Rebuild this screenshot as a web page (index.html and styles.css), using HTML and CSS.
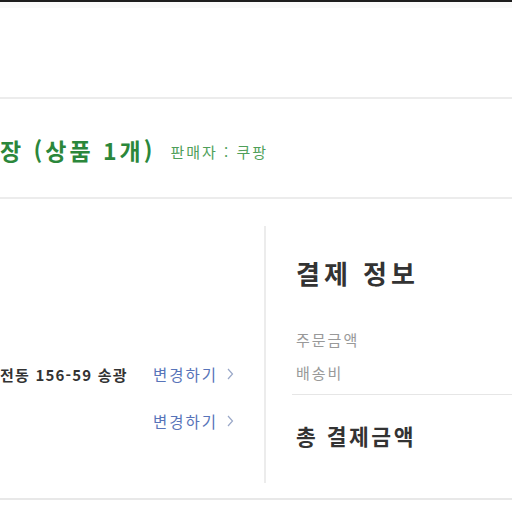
FILE: index.html
```html
<!DOCTYPE html>
<html lang="ko">
<head>
<meta charset="utf-8">
<link rel="stylesheet" href="styles.css">
</head>
<body>
<div class="topbar"></div>
<div class="topshade"></div>
<div class="gap"></div>
<section class="seller-head">
  <h2 class="bundle-title">장 (상품 1개)</h2>
  <span class="seller">판매자 : 쿠팡</span>
</section>
<section class="content">
  <div class="ship-col">
    <div class="ship-row">
      <span class="address">전동 156-59 송광</span>
      <a class="change-link">변경하기<svg class="chev" width="7" height="12" viewBox="0 0 7 12"><path d="M1 1 L5.5 6 L1 11" fill="none" stroke="#9aa8c8" stroke-width="1.2"/></svg></a>
    </div>
    <div class="ship-row">
      <span class="address"></span>
      <a class="change-link">변경하기<svg class="chev" width="7" height="12" viewBox="0 0 7 12"><path d="M1 1 L5.5 6 L1 11" fill="none" stroke="#9aa8c8" stroke-width="1.2"/></svg></a>
    </div>
  </div>
  <div class="pay-col">
    <h3 class="pay-title">결제 정보</h3>
    <div class="pay-rows">
      <div class="pay-row">주문금액</div>
      <div class="pay-row">배송비</div>
    </div>
    <div class="pay-divider"></div>
    <div class="pay-total">총 결제금액</div>
  </div>
</section>
</body>
</html>
```
FILE: styles.css
```css
* { box-sizing: border-box; }
html, body { margin: 0; padding: 0; background: #fff; }
body {
  width: 512px;
  height: 512px;
  overflow: hidden;
  font-family: "Noto Sans CJK KR", "Noto Sans", "Liberation Sans", sans-serif;
  color: #333;
}
.topbar { height: 2px; background: #1e1e1e; }
.topshade { height: 6px; background: #fafafa; }
.gap { height: 89px; }
.seller-head {
  height: 102px;
  border-top: 2px solid #ececec;
  border-bottom: 2px solid #ececec;
  display: flex;
  align-items: center;
  gap: 15px;
  padding-top: 4px;
}
.bundle-title {
  margin: 0;
  font-size: 23px;
  font-weight: 700;
  color: #2b873b;
  line-height: 30px;
  letter-spacing: 3px;
}
.seller {
  font-size: 15px;
  color: #4f9f5a;
  line-height: 20px;
  padding-top: 3px;
  letter-spacing: 2px;
}
.content {
  display: flex;
  height: 301px;
  padding: 27px 0 15px;
  border-bottom: 2px solid #e8e8e8;
}
.ship-col {
  width: 266px;
  border-right: 2px solid #ececec;
  padding-top: 136px;
  display: flex;
  flex-direction: column;
  gap: 23px;
}
.ship-row {
  display: grid;
  grid-template-columns: 153px auto;
  height: 24px;
  align-items: center;
}
.address {
  font-size: 15px;
  font-weight: 700;
  color: #333;
  white-space: nowrap;
  letter-spacing: 1.2px;
}
.change-link {
  font-size: 15.5px;
  color: #5874b9;
  display: inline-flex;
  align-items: center;
  gap: 9px;
  letter-spacing: 2px;
}
.chev { display: block; }
.pay-col {
  flex: 1;
  padding: 31px 0 0 26px;
}
.pay-title {
  margin: 0 0 0 4px;
  font-size: 26px;
  font-weight: 700;
  line-height: 32px;
  color: #333;
  letter-spacing: 4px;
}
.pay-rows {
  margin-top: 40px;
  padding-left: 4px;
  display: flex;
  flex-direction: column;
  gap: 11px;
}
.pay-row {
  font-size: 15px;
  line-height: 22px;
  color: #999;
  letter-spacing: 2px;
}
.pay-divider {
  margin-top: 10px;
  height: 1px;
  background: #e6e6e6;
}
.pay-total {
  margin-top: 27px;
  padding-left: 4px;
  font-size: 21.5px;
  font-weight: 700;
  line-height: 28px;
  color: #333;
  letter-spacing: 2.5px;
}
```
